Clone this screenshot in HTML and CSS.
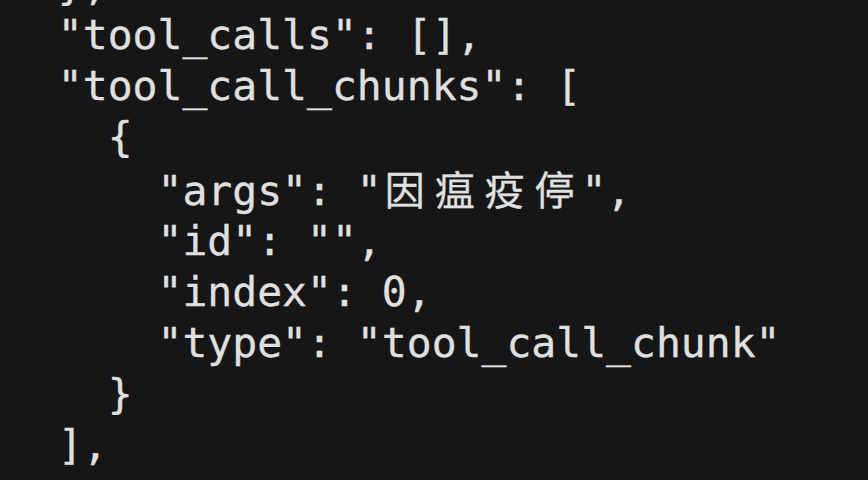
FILE: index.html
```html
<!DOCTYPE html>
<html lang="en">
<head>
<meta charset="utf-8">
<title>tool_call_chunks</title>
<link rel="stylesheet" href="styles.css">
</head>
<body>
<pre class="code">  },
  "tool_calls": [],
  "tool_call_chunks": [
    {
      "args": "<span class="cjk">因瘟疫停</span>",
      "id": "",
      "index": 0,
      "type": "tool_call_chunk"
    }
  ],
</pre>
</body>
</html>
```

FILE: styles.css
```css
html, body {
  margin: 0;
  padding: 0;
  background: #161616;
  height: 100%;
  overflow: hidden;
}

.code {
  margin: -40.5px 0 0 0;
  padding: 0 0 0 8px;
  font-family: "DejaVu Sans Mono", "Noto Sans CJK SC", monospace;
  font-size: 41.4px;
  line-height: 50.8px;
  color: #e0e0e0;
  white-space: pre;
  -webkit-text-stroke: 0.3px #e0e0e0;
}

.cjk {
  font-family: "Noto Sans CJK SC", "DejaVu Sans Mono", sans-serif;
  font-size: 40px;
  letter-spacing: 9.9px;
  padding-left: 3px;
  margin-right: -3px;
}
```
